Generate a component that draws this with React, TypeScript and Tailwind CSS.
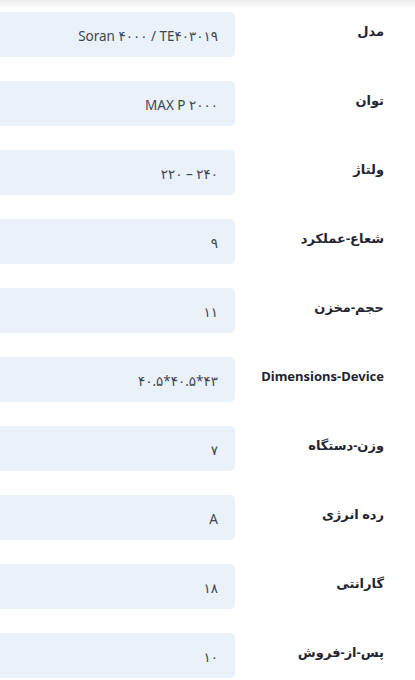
import React from "react";

interface SpecRow {
  label: string;
  value: string;
}

const SPECS: SpecRow[] = [
  { label: "مدل", value: "Soran ۴۰۰۰ / TE۴۰۳۰۱۹" },
  { label: "توان", value: "MAX P ۲۰۰۰" },
  { label: "ولتاژ", value: "۲۲۰ – ۲۴۰" },
  { label: "شعاع-عملکرد", value: "۹" },
  { label: "حجم-مخزن", value: "۱۱" },
  { label: "Dimensions-Device", value: "۴۰.۵*۴۰.۵*۴۳" },
  { label: "وزن-دستگاه", value: "۷" },
  { label: "رده انرژی", value: "A" },
  { label: "گارانتی", value: "۱۸" },
  { label: "پس-از-فروش", value: "۱۰" },
];

function SpecItem({ label, value }: SpecRow) {
  return (
    <div className="flex items-start">
      {/* label column */}
      <div className="w-[149px] shrink-0 pt-[9px] text-[13px] leading-5 font-bold text-[#1f2530]">
        {label}
      </div>
      {/* value box */}
      <div className="w-[280px] shrink-0 h-[45px] rounded-[5px] bg-[#eaf1f8] flex items-center pr-[17px] pt-[3px]">
        <span dir="ltr" className="text-[13.5px] leading-5 text-[#3d4654]">
          {value}
        </span>
      </div>
    </div>
  );
}

export default function App() {
  return (
    <div
      dir="rtl"
      className="w-[415px] h-[680px] overflow-hidden bg-white"
      style={{ fontFamily: '"Noto Sans", "DejaVu Sans", sans-serif' }}
    >
      <div className="h-[8px] bg-gradient-to-b from-[#ececec] to-white" />
      <div className="flex flex-col gap-[24px] pt-[4px] pr-[31px]">
        {SPECS.map((s) => (
          <SpecItem key={s.label} {...s} />
        ))}
      </div>
    </div>
  );
}
